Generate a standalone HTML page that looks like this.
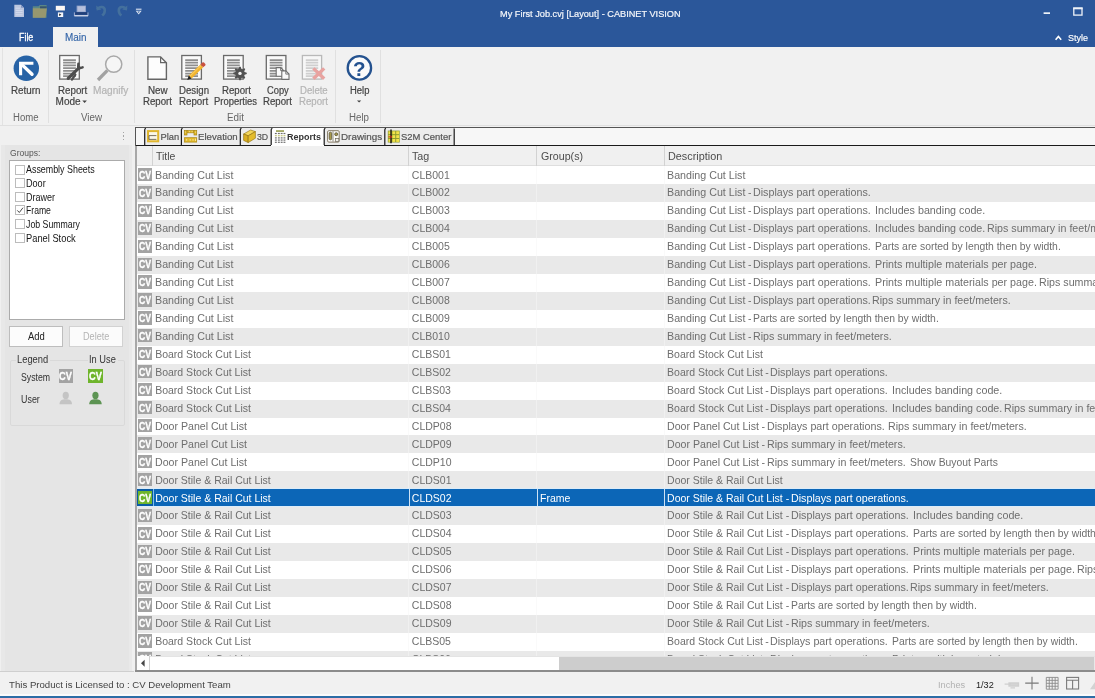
<!DOCTYPE html>
<html lang="en"><head><meta charset="utf-8"><title>My First Job.cvj [Layout] - CABINET VISION</title>
<style>
html,body{margin:0;padding:0;}
body{width:1095px;height:698px;overflow:hidden;position:relative;background:#f1f1f1;font-family:"Liberation Sans",sans-serif;}
#app{position:absolute;left:0;top:0;width:1095px;height:698px;overflow:hidden;will-change:transform;}
#app div{position:absolute;box-sizing:border-box;}
#app .t{white-space:pre;transform-origin:0 50%;}
#app svg{position:absolute;left:0;top:0;}
</style></head><body><div id="app">
<div style="left:0px;top:0px;width:1095px;height:47px;background:#2b579a;"></div>
<div style="left:53px;top:27px;width:45px;height:21px;background:#f1f1f1;"></div>
<div id="t1" class="t" style="left:19.00px;top:30.80px;font:400 10px/13px 'Liberation Sans', sans-serif;color:#ffffff;transform:scaleX(0.8868);-webkit-text-stroke:0.3px #ffffff;">File</div>
<div id="t2" class="t" style="left:65.00px;top:30.80px;font:400 10px/13px 'Liberation Sans', sans-serif;color:#3566a8;transform:scaleX(0.9914);-webkit-text-stroke:0.15px #3566a8;">Main</div>
<div id="t3" class="t" style="left:499.80px;top:7.50px;font:400 9.6px/12px 'Liberation Sans', sans-serif;color:#f4f6fa;transform:scaleX(0.9579);-webkit-text-stroke:0.2px #f4f6fa;">My First Job.cvj [Layout] - CABINET VISION</div>
<div id="t4" class="t" style="left:1067.50px;top:31.50px;font:400 9.6px/12px 'Liberation Sans', sans-serif;color:#ffffff;transform:scaleX(0.9417);-webkit-text-stroke:0.15px #ffffff;">Style</div>
<div style="left:0px;top:47px;width:1095px;height:79px;background:#f1f1f1;"></div>
<div style="left:0px;top:125px;width:1095px;height:1px;background:#e0e0e0;"></div>
<div style="left:48px;top:50px;width:1px;height:73px;background:#e0e0e0;"></div>
<div style="left:134px;top:50px;width:1px;height:73px;background:#e0e0e0;"></div>
<div style="left:335px;top:50px;width:1px;height:73px;background:#e0e0e0;"></div>
<div style="left:380px;top:50px;width:1px;height:73px;background:#e0e0e0;"></div>
<div style="left:1.5px;top:48px;width:1px;height:77px;background:#e2e2e2;"></div>
<div id="t5" class="t" style="left:11.20px;top:84.10px;font:400 10px/13px 'Liberation Sans', sans-serif;color:#444444;transform:scaleX(0.9828);-webkit-text-stroke:0.2px #444444;">Return</div>
<div id="t6" class="t" style="left:57.50px;top:84.10px;font:400 10px/13px 'Liberation Sans', sans-serif;color:#444444;transform:scaleX(0.9762);-webkit-text-stroke:0.2px #444444;">Report</div>
<div id="t7" class="t" style="left:55.60px;top:95.20px;font:400 10px/13px 'Liberation Sans', sans-serif;color:#444444;-webkit-text-stroke:0.2px #444444;">Mode</div>
<div id="t8" class="t" style="left:92.60px;top:84.10px;font:400 10px/13px 'Liberation Sans', sans-serif;color:#b4b4b4;transform:scaleX(1.0110);-webkit-text-stroke:0.2px #b4b4b4;">Magnify</div>
<div id="t9" class="t" style="left:147.80px;top:84.10px;font:400 10px/13px 'Liberation Sans', sans-serif;color:#444444;transform:scaleX(0.9842);-webkit-text-stroke:0.2px #444444;">New</div>
<div id="t10" class="t" style="left:143.00px;top:95.20px;font:400 10px/13px 'Liberation Sans', sans-serif;color:#444444;transform:scaleX(0.9662);-webkit-text-stroke:0.2px #444444;">Report</div>
<div id="t11" class="t" style="left:178.80px;top:84.10px;font:400 10px/13px 'Liberation Sans', sans-serif;color:#444444;transform:scaleX(0.9634);-webkit-text-stroke:0.2px #444444;">Design</div>
<div id="t12" class="t" style="left:178.80px;top:95.20px;font:400 10px/13px 'Liberation Sans', sans-serif;color:#444444;transform:scaleX(0.9728);-webkit-text-stroke:0.2px #444444;">Report</div>
<div id="t13" class="t" style="left:221.60px;top:84.10px;font:400 10px/13px 'Liberation Sans', sans-serif;color:#444444;transform:scaleX(0.9662);-webkit-text-stroke:0.2px #444444;">Report</div>
<div id="t14" class="t" style="left:214.00px;top:95.20px;font:400 10px/13px 'Liberation Sans', sans-serif;color:#444444;transform:scaleX(0.9434);-webkit-text-stroke:0.2px #444444;">Properties</div>
<div id="t15" class="t" style="left:267.40px;top:84.10px;font:400 10px/13px 'Liberation Sans', sans-serif;color:#444444;transform:scaleX(0.9332);-webkit-text-stroke:0.2px #444444;">Copy</div>
<div id="t16" class="t" style="left:263.20px;top:95.20px;font:400 10px/13px 'Liberation Sans', sans-serif;color:#444444;transform:scaleX(0.9628);-webkit-text-stroke:0.2px #444444;">Report</div>
<div id="t17" class="t" style="left:299.80px;top:84.10px;font:400 10px/13px 'Liberation Sans', sans-serif;color:#b4b4b4;transform:scaleX(0.9583);-webkit-text-stroke:0.2px #b4b4b4;">Delete</div>
<div id="t18" class="t" style="left:299.00px;top:95.20px;font:400 10px/13px 'Liberation Sans', sans-serif;color:#b4b4b4;transform:scaleX(0.9662);-webkit-text-stroke:0.2px #b4b4b4;">Report</div>
<div id="t19" class="t" style="left:349.60px;top:84.10px;font:400 10px/13px 'Liberation Sans', sans-serif;color:#444444;transform:scaleX(0.9427);-webkit-text-stroke:0.2px #444444;">Help</div>
<div id="t20" class="t" style="left:12.85px;top:110.50px;font:400 10px/13px 'Liberation Sans', sans-serif;color:#666666;transform:scaleX(0.9555);">Home</div>
<div id="t21" class="t" style="left:81.30px;top:110.50px;font:400 10px/13px 'Liberation Sans', sans-serif;color:#666666;transform:scaleX(0.9767);">View</div>
<div id="t22" class="t" style="left:227.20px;top:110.50px;font:400 10px/13px 'Liberation Sans', sans-serif;color:#666666;transform:scaleX(0.9864);">Edit</div>
<div id="t23" class="t" style="left:349.10px;top:110.50px;font:400 10px/13px 'Liberation Sans', sans-serif;color:#666666;transform:scaleX(0.9719);">Help</div>
<div style="left:0px;top:126.2px;width:134px;height:19px;background:#f0f0f0;"></div>
<div style="left:0px;top:145px;width:134px;height:527px;background:#e5e5e5;"></div>
<div style="left:0px;top:145px;width:1px;height:527px;background:#f0f0f0;"></div>
<div style="left:1px;top:145px;width:4px;height:527px;background:#e8e8e8;"></div>
<div style="left:129px;top:145px;width:3px;height:527px;background:#e9e9e9;"></div>
<div style="left:132px;top:126.2px;width:3px;height:546px;background:#f0f0f0;"></div>
<div style="left:123px;top:132.0px;width:1.3px;height:1.3px;background:#a6a6a6;"></div>
<div style="left:123px;top:135.3px;width:1.3px;height:1.3px;background:#a6a6a6;"></div>
<div style="left:123px;top:138.6px;width:1.3px;height:1.3px;background:#a6a6a6;"></div>
<div id="t24" class="t" style="left:9.80px;top:146.60px;font:400 9px/12px 'Liberation Sans', sans-serif;color:#555;transform:scaleX(0.9495);">Groups:</div>
<div style="left:9px;top:160px;width:116px;height:160px;background:#ffffff;border:1px solid #ababab;"></div>
<div style="left:15px;top:165px;width:10px;height:10px;background:#ffffff;border:1px solid #bcbcbc;"></div>
<div id="t25" class="t" style="left:26.30px;top:162.40px;font:400 10.8px/14px 'Liberation Sans', sans-serif;color:#151515;transform:scaleX(0.8235);">Assembly Sheets</div>
<div style="left:15px;top:178px;width:10px;height:10px;background:#ffffff;border:1px solid #bcbcbc;"></div>
<div id="t26" class="t" style="left:26.30px;top:176.03px;font:400 10.8px/14px 'Liberation Sans', sans-serif;color:#151515;transform:scaleX(0.8417);">Door</div>
<div style="left:15px;top:192px;width:10px;height:10px;background:#ffffff;border:1px solid #bcbcbc;"></div>
<div id="t27" class="t" style="left:26.30px;top:189.66px;font:400 10.8px/14px 'Liberation Sans', sans-serif;color:#151515;transform:scaleX(0.8334);">Drawer</div>
<div style="left:15px;top:205px;width:10px;height:10px;background:#ffffff;border:1px solid #bcbcbc;"></div>
<div id="t28" class="t" style="left:26.30px;top:203.29px;font:400 10.8px/14px 'Liberation Sans', sans-serif;color:#151515;transform:scaleX(0.7980);">Frame</div>
<div style="left:15px;top:219px;width:10px;height:10px;background:#ffffff;border:1px solid #bcbcbc;"></div>
<div id="t29" class="t" style="left:26.30px;top:216.92px;font:400 10.8px/14px 'Liberation Sans', sans-serif;color:#151515;transform:scaleX(0.8107);">Job Summary</div>
<div style="left:15px;top:233px;width:10px;height:10px;background:#ffffff;border:1px solid #bcbcbc;"></div>
<div id="t30" class="t" style="left:26.30px;top:230.55px;font:400 10.8px/14px 'Liberation Sans', sans-serif;color:#151515;transform:scaleX(0.8625);">Panel Stock</div>
<div style="left:9px;top:326px;width:54px;height:21px;background:#fcfcfc;border:1px solid #bdbdbd;"></div>
<div style="left:69px;top:326px;width:54px;height:21px;background:#fbfbfb;border:1px solid #d2d2d2;"></div>
<div id="t31" class="t" style="left:28.00px;top:330.10px;font:400 10px/13px 'Liberation Sans', sans-serif;color:#222;transform:scaleX(0.9440);">Add</div>
<div id="t32" class="t" style="left:82.80px;top:330.10px;font:400 10px/13px 'Liberation Sans', sans-serif;color:#b4b4b4;transform:scaleX(0.9133);">Delete</div>
<div style="left:9.5px;top:359.8px;width:115px;height:66px;background:transparent;border:1px solid #d9d9d9;border-radius:2px;"></div>
<div style="left:15.5px;top:354px;width:34.5px;height:12px;background:#e5e5e5;"></div>
<div style="left:87.5px;top:354px;width:30.5px;height:12px;background:#e5e5e5;"></div>
<div id="t33" class="t" style="left:17.00px;top:353.10px;font:400 10px/13px 'Liberation Sans', sans-serif;color:#333;transform:scaleX(0.9348);">Legend</div>
<div id="t34" class="t" style="left:89.20px;top:353.10px;font:400 10px/13px 'Liberation Sans', sans-serif;color:#333;transform:scaleX(0.9271);">In Use</div>
<div id="t35" class="t" style="left:20.60px;top:370.90px;font:400 10px/13px 'Liberation Sans', sans-serif;color:#333;transform:scaleX(0.8727);">System</div>
<div id="t36" class="t" style="left:20.60px;top:393.30px;font:400 10px/13px 'Liberation Sans', sans-serif;color:#333;transform:scaleX(0.8899);">User</div>
<div style="left:58.6px;top:369.2px;width:14.2px;height:13.8px;background:#a3a3a3;"></div>
<div id="t37" class="t" style="left:59.40px;top:370.30px;font:700 10.8px/12px 'Liberation Sans', sans-serif;color:#ffffff;transform:scaleX(0.8533);-webkit-text-stroke:0.35px #ffffff;">CV</div>
<div style="left:88.4px;top:369.2px;width:14.2px;height:13.8px;background:#6fb52c;"></div>
<div id="t38" class="t" style="left:89.20px;top:370.30px;font:700 10.8px/12px 'Liberation Sans', sans-serif;color:#ffffff;transform:scaleX(0.8533);-webkit-text-stroke:0.35px #ffffff;">CV</div>
<div style="left:135px;top:127px;width:960px;height:545px;background:#ffffff;"></div>
<div style="left:135px;top:146px;width:2px;height:526px;background:#a8a8a8;"></div>
<div style="left:135px;top:127px;width:1px;height:19px;background:#555555;"></div>
<div style="left:135px;top:127px;width:960px;height:1px;background:#555555;"></div>
<div style="left:136px;top:128px;width:959px;height:17px;background:#f7f7f7;"></div>
<div style="left:136.2px;top:144.7px;width:959px;height:1.3px;background:#1a1a1a;"></div>
<div style="left:144.7px;top:128.3px;width:36.70000000000002px;height:16.4px;background:#ececec;"></div>
<div id="t39" class="t" style="left:160.60px;top:131.00px;font:400 9.3px/12px 'Liberation Sans', sans-serif;color:#555555;-webkit-text-stroke:0.2px #555555;">Plan</div>
<div style="left:181.4px;top:128.3px;width:58.900000000000006px;height:16.4px;background:#ececec;"></div>
<div id="t40" class="t" style="left:198.30px;top:131.00px;font:400 9.3px/12px 'Liberation Sans', sans-serif;color:#555555;transform:scaleX(1.0379);-webkit-text-stroke:0.2px #555555;">Elevation</div>
<div style="left:240.3px;top:128.3px;width:30.899999999999977px;height:16.4px;background:#ececec;"></div>
<div id="t41" class="t" style="left:257.00px;top:131.00px;font:400 9.3px/12px 'Liberation Sans', sans-serif;color:#555555;transform:scaleX(0.9419);-webkit-text-stroke:0.2px #555555;">3D</div>
<div style="left:271.2px;top:128.3px;width:53.0px;height:17.8px;background:#ffffff;"></div>
<div id="t42" class="t" style="left:287.40px;top:131.00px;font:700 9.3px/12px 'Liberation Sans', sans-serif;color:#333333;transform:scaleX(0.9675);">Reports</div>
<div style="left:324.2px;top:128.3px;width:60.60000000000002px;height:16.4px;background:#ececec;"></div>
<div id="t43" class="t" style="left:341.00px;top:131.00px;font:400 9.3px/12px 'Liberation Sans', sans-serif;color:#555555;transform:scaleX(1.0606);-webkit-text-stroke:0.2px #555555;">Drawings</div>
<div style="left:384.8px;top:128.3px;width:69.39999999999998px;height:16.4px;background:#ececec;"></div>
<div id="t44" class="t" style="left:401.30px;top:131.00px;font:400 9.3px/12px 'Liberation Sans', sans-serif;color:#555555;transform:scaleX(1.0139);-webkit-text-stroke:0.2px #555555;">S2M Center</div>
<div style="left:137px;top:146px;width:958px;height:20.3px;background:#f0f0f0;"></div>
<div style="left:137px;top:165.4px;width:958px;height:1px;background:#dedede;"></div>
<div style="left:152px;top:146px;width:1px;height:20px;background:#d2d2d2;"></div>
<div style="left:408px;top:146px;width:1px;height:20px;background:#d2d2d2;"></div>
<div style="left:536px;top:146px;width:1px;height:20px;background:#d2d2d2;"></div>
<div style="left:664px;top:146px;width:1px;height:20px;background:#d2d2d2;"></div>
<div id="t45" class="t" style="left:156.00px;top:149.50px;font:400 10px/13px 'Liberation Sans', sans-serif;color:#4c4c4c;transform:scaleX(1.0469);">Title</div>
<div id="t46" class="t" style="left:412.40px;top:149.50px;font:400 10px/13px 'Liberation Sans', sans-serif;color:#4c4c4c;transform:scaleX(1.0729);">Tag</div>
<div id="t47" class="t" style="left:540.80px;top:149.50px;font:400 10px/13px 'Liberation Sans', sans-serif;color:#4c4c4c;transform:scaleX(1.0646);">Group(s)</div>
<div id="t48" class="t" style="left:668.00px;top:149.50px;font:400 10px/13px 'Liberation Sans', sans-serif;color:#4c4c4c;transform:scaleX(1.0833);">Description</div>
<div style="left:137px;top:166.3px;width:958px;height:17.945px;background:#ffffff;"></div>
<div style="left:408px;top:166.3px;width:1px;height:17.945px;background:#fafafa;"></div>
<div style="left:536px;top:166.3px;width:1px;height:17.945px;background:#fafafa;"></div>
<div style="left:664px;top:166.3px;width:1px;height:17.945px;background:#fafafa;"></div>
<div style="left:138.2px;top:167.8px;width:13.5px;height:13.2px;background:#a3a3a3;"></div>
<div id="t49" class="t" style="left:139.00px;top:168.60px;font:700 10.8px/12px 'Liberation Sans', sans-serif;color:#ffffff;transform:scaleX(0.8067);-webkit-text-stroke:0.35px #ffffff;">CV</div>
<div id="t50" class="t" style="left:155.20px;top:168.00px;font:400 10.5px/14px 'Liberation Sans', sans-serif;color:#6e6e6e;transform:scaleX(1.0174);">Banding Cut List</div>
<div id="t51" class="t" style="left:411.80px;top:168.00px;font:400 10.5px/14px 'Liberation Sans', sans-serif;color:#6e6e6e;">CLB001</div>
<div id="t52" class="t" style="left:667.10px;top:168.00px;font:400 10.5px/14px 'Liberation Sans', sans-serif;color:#6e6e6e;transform:scaleX(1.0174);">Banding Cut List</div>
<div style="left:137px;top:184.245px;width:958px;height:17.945px;background:#e9e9e9;"></div>
<div style="left:408px;top:184.245px;width:1px;height:17.945px;background:#f0f0f0;"></div>
<div style="left:536px;top:184.245px;width:1px;height:17.945px;background:#f0f0f0;"></div>
<div style="left:664px;top:184.245px;width:1px;height:17.945px;background:#f0f0f0;"></div>
<div style="left:138.2px;top:185.745px;width:13.5px;height:13.2px;background:#a3a3a3;"></div>
<div id="t53" class="t" style="left:139.00px;top:186.54px;font:700 10.8px/12px 'Liberation Sans', sans-serif;color:#ffffff;transform:scaleX(0.8067);-webkit-text-stroke:0.35px #ffffff;">CV</div>
<div id="t54" class="t" style="left:155.20px;top:185.00px;font:400 10.5px/14px 'Liberation Sans', sans-serif;color:#6e6e6e;transform:scaleX(1.0174);">Banding Cut List</div>
<div id="t55" class="t" style="left:411.80px;top:185.00px;font:400 10.5px/14px 'Liberation Sans', sans-serif;color:#6e6e6e;">CLB002</div>
<div id="t56" class="t" style="left:667.10px;top:185.00px;font:400 10.5px/14px 'Liberation Sans', sans-serif;color:#6e6e6e;transform:scaleX(1.0174);">Banding Cut List</div>
<div id="t57" class="t" style="left:748.10px;top:185.00px;font:400 10.5px/14px 'Liberation Sans', sans-serif;color:#6e6e6e;">-</div>
<div id="t58" class="t" style="left:753.25px;top:185.00px;font:400 10.5px/14px 'Liberation Sans', sans-serif;color:#6e6e6e;transform:scaleX(1.0185);">Displays part operations.</div>
<div style="left:137px;top:202.19px;width:958px;height:17.945px;background:#ffffff;"></div>
<div style="left:408px;top:202.19px;width:1px;height:17.945px;background:#fafafa;"></div>
<div style="left:536px;top:202.19px;width:1px;height:17.945px;background:#fafafa;"></div>
<div style="left:664px;top:202.19px;width:1px;height:17.945px;background:#fafafa;"></div>
<div style="left:138.2px;top:203.69px;width:13.5px;height:13.2px;background:#a3a3a3;"></div>
<div id="t59" class="t" style="left:139.00px;top:204.49px;font:700 10.8px/12px 'Liberation Sans', sans-serif;color:#ffffff;transform:scaleX(0.8067);-webkit-text-stroke:0.35px #ffffff;">CV</div>
<div id="t60" class="t" style="left:155.20px;top:203.00px;font:400 10.5px/14px 'Liberation Sans', sans-serif;color:#6e6e6e;transform:scaleX(1.0174);">Banding Cut List</div>
<div id="t61" class="t" style="left:411.80px;top:203.00px;font:400 10.5px/14px 'Liberation Sans', sans-serif;color:#6e6e6e;">CLB003</div>
<div id="t62" class="t" style="left:667.10px;top:203.00px;font:400 10.5px/14px 'Liberation Sans', sans-serif;color:#6e6e6e;transform:scaleX(1.0174);">Banding Cut List</div>
<div id="t63" class="t" style="left:748.10px;top:203.00px;font:400 10.5px/14px 'Liberation Sans', sans-serif;color:#6e6e6e;">-</div>
<div id="t64" class="t" style="left:753.25px;top:203.00px;font:400 10.5px/14px 'Liberation Sans', sans-serif;color:#6e6e6e;transform:scaleX(1.0185);">Displays part operations.</div>
<div id="t65" class="t" style="left:874.95px;top:203.00px;font:400 10.5px/14px 'Liberation Sans', sans-serif;color:#6e6e6e;transform:scaleX(1.0213);">Includes banding code.</div>
<div style="left:137px;top:220.13500000000002px;width:958px;height:17.945px;background:#e9e9e9;"></div>
<div style="left:408px;top:220.13500000000002px;width:1px;height:17.945px;background:#f0f0f0;"></div>
<div style="left:536px;top:220.13500000000002px;width:1px;height:17.945px;background:#f0f0f0;"></div>
<div style="left:664px;top:220.13500000000002px;width:1px;height:17.945px;background:#f0f0f0;"></div>
<div style="left:138.2px;top:221.63500000000002px;width:13.5px;height:13.2px;background:#a3a3a3;"></div>
<div id="t66" class="t" style="left:139.00px;top:222.44px;font:700 10.8px/12px 'Liberation Sans', sans-serif;color:#ffffff;transform:scaleX(0.8067);-webkit-text-stroke:0.35px #ffffff;">CV</div>
<div id="t67" class="t" style="left:155.20px;top:221.00px;font:400 10.5px/14px 'Liberation Sans', sans-serif;color:#6e6e6e;transform:scaleX(1.0174);">Banding Cut List</div>
<div id="t68" class="t" style="left:411.80px;top:221.00px;font:400 10.5px/14px 'Liberation Sans', sans-serif;color:#6e6e6e;">CLB004</div>
<div id="t69" class="t" style="left:667.10px;top:221.00px;font:400 10.5px/14px 'Liberation Sans', sans-serif;color:#6e6e6e;transform:scaleX(1.0174);">Banding Cut List</div>
<div id="t70" class="t" style="left:748.10px;top:221.00px;font:400 10.5px/14px 'Liberation Sans', sans-serif;color:#6e6e6e;">-</div>
<div id="t71" class="t" style="left:753.25px;top:221.00px;font:400 10.5px/14px 'Liberation Sans', sans-serif;color:#6e6e6e;transform:scaleX(1.0185);">Displays part operations.</div>
<div id="t72" class="t" style="left:874.95px;top:221.00px;font:400 10.5px/14px 'Liberation Sans', sans-serif;color:#6e6e6e;transform:scaleX(1.0213);">Includes banding code.</div>
<div id="t73" class="t" style="left:986.65px;top:221.00px;font:400 10.5px/14px 'Liberation Sans', sans-serif;color:#6e6e6e;transform:scaleX(1.0158);">Rips summary in feet/meters.</div>
<div style="left:137px;top:238.08px;width:958px;height:17.945px;background:#ffffff;"></div>
<div style="left:408px;top:238.08px;width:1px;height:17.945px;background:#fafafa;"></div>
<div style="left:536px;top:238.08px;width:1px;height:17.945px;background:#fafafa;"></div>
<div style="left:664px;top:238.08px;width:1px;height:17.945px;background:#fafafa;"></div>
<div style="left:138.2px;top:239.58px;width:13.5px;height:13.2px;background:#a3a3a3;"></div>
<div id="t74" class="t" style="left:139.00px;top:240.38px;font:700 10.8px/12px 'Liberation Sans', sans-serif;color:#ffffff;transform:scaleX(0.8067);-webkit-text-stroke:0.35px #ffffff;">CV</div>
<div id="t75" class="t" style="left:155.20px;top:239.00px;font:400 10.5px/14px 'Liberation Sans', sans-serif;color:#6e6e6e;transform:scaleX(1.0174);">Banding Cut List</div>
<div id="t76" class="t" style="left:411.80px;top:239.00px;font:400 10.5px/14px 'Liberation Sans', sans-serif;color:#6e6e6e;">CLB005</div>
<div id="t77" class="t" style="left:667.10px;top:239.00px;font:400 10.5px/14px 'Liberation Sans', sans-serif;color:#6e6e6e;transform:scaleX(1.0174);">Banding Cut List</div>
<div id="t78" class="t" style="left:748.10px;top:239.00px;font:400 10.5px/14px 'Liberation Sans', sans-serif;color:#6e6e6e;">-</div>
<div id="t79" class="t" style="left:753.25px;top:239.00px;font:400 10.5px/14px 'Liberation Sans', sans-serif;color:#6e6e6e;transform:scaleX(1.0185);">Displays part operations.</div>
<div id="t80" class="t" style="left:874.95px;top:239.00px;font:400 10.5px/14px 'Liberation Sans', sans-serif;color:#6e6e6e;transform:scaleX(0.9885);">Parts are sorted by length then by width.</div>
<div style="left:137px;top:256.025px;width:958px;height:17.945px;background:#e9e9e9;"></div>
<div style="left:408px;top:256.025px;width:1px;height:17.945px;background:#f0f0f0;"></div>
<div style="left:536px;top:256.025px;width:1px;height:17.945px;background:#f0f0f0;"></div>
<div style="left:664px;top:256.025px;width:1px;height:17.945px;background:#f0f0f0;"></div>
<div style="left:138.2px;top:257.525px;width:13.5px;height:13.2px;background:#a3a3a3;"></div>
<div id="t81" class="t" style="left:139.00px;top:258.32px;font:700 10.8px/12px 'Liberation Sans', sans-serif;color:#ffffff;transform:scaleX(0.8067);-webkit-text-stroke:0.35px #ffffff;">CV</div>
<div id="t82" class="t" style="left:155.20px;top:257.00px;font:400 10.5px/14px 'Liberation Sans', sans-serif;color:#6e6e6e;transform:scaleX(1.0174);">Banding Cut List</div>
<div id="t83" class="t" style="left:411.80px;top:257.00px;font:400 10.5px/14px 'Liberation Sans', sans-serif;color:#6e6e6e;">CLB006</div>
<div id="t84" class="t" style="left:667.10px;top:257.00px;font:400 10.5px/14px 'Liberation Sans', sans-serif;color:#6e6e6e;transform:scaleX(1.0174);">Banding Cut List</div>
<div id="t85" class="t" style="left:748.10px;top:257.00px;font:400 10.5px/14px 'Liberation Sans', sans-serif;color:#6e6e6e;">-</div>
<div id="t86" class="t" style="left:753.25px;top:257.00px;font:400 10.5px/14px 'Liberation Sans', sans-serif;color:#6e6e6e;transform:scaleX(1.0185);">Displays part operations.</div>
<div id="t87" class="t" style="left:874.95px;top:257.00px;font:400 10.5px/14px 'Liberation Sans', sans-serif;color:#6e6e6e;transform:scaleX(1.0198);">Prints multiple materials per page.</div>
<div style="left:137px;top:273.97px;width:958px;height:17.945px;background:#ffffff;"></div>
<div style="left:408px;top:273.97px;width:1px;height:17.945px;background:#fafafa;"></div>
<div style="left:536px;top:273.97px;width:1px;height:17.945px;background:#fafafa;"></div>
<div style="left:664px;top:273.97px;width:1px;height:17.945px;background:#fafafa;"></div>
<div style="left:138.2px;top:275.47px;width:13.5px;height:13.2px;background:#a3a3a3;"></div>
<div id="t88" class="t" style="left:139.00px;top:276.27px;font:700 10.8px/12px 'Liberation Sans', sans-serif;color:#ffffff;transform:scaleX(0.8067);-webkit-text-stroke:0.35px #ffffff;">CV</div>
<div id="t89" class="t" style="left:155.20px;top:275.00px;font:400 10.5px/14px 'Liberation Sans', sans-serif;color:#6e6e6e;transform:scaleX(1.0174);">Banding Cut List</div>
<div id="t90" class="t" style="left:411.80px;top:275.00px;font:400 10.5px/14px 'Liberation Sans', sans-serif;color:#6e6e6e;">CLB007</div>
<div id="t91" class="t" style="left:667.10px;top:275.00px;font:400 10.5px/14px 'Liberation Sans', sans-serif;color:#6e6e6e;transform:scaleX(1.0174);">Banding Cut List</div>
<div id="t92" class="t" style="left:748.10px;top:275.00px;font:400 10.5px/14px 'Liberation Sans', sans-serif;color:#6e6e6e;">-</div>
<div id="t93" class="t" style="left:753.25px;top:275.00px;font:400 10.5px/14px 'Liberation Sans', sans-serif;color:#6e6e6e;transform:scaleX(1.0185);">Displays part operations.</div>
<div id="t94" class="t" style="left:874.95px;top:275.00px;font:400 10.5px/14px 'Liberation Sans', sans-serif;color:#6e6e6e;transform:scaleX(1.0198);">Prints multiple materials per page.</div>
<div id="t95" class="t" style="left:1039.05px;top:275.00px;font:400 10.5px/14px 'Liberation Sans', sans-serif;color:#6e6e6e;transform:scaleX(1.0158);">Rips summary in feet/meters.</div>
<div style="left:137px;top:291.915px;width:958px;height:17.945px;background:#e9e9e9;"></div>
<div style="left:408px;top:291.915px;width:1px;height:17.945px;background:#f0f0f0;"></div>
<div style="left:536px;top:291.915px;width:1px;height:17.945px;background:#f0f0f0;"></div>
<div style="left:664px;top:291.915px;width:1px;height:17.945px;background:#f0f0f0;"></div>
<div style="left:138.2px;top:293.415px;width:13.5px;height:13.2px;background:#a3a3a3;"></div>
<div id="t96" class="t" style="left:139.00px;top:294.22px;font:700 10.8px/12px 'Liberation Sans', sans-serif;color:#ffffff;transform:scaleX(0.8067);-webkit-text-stroke:0.35px #ffffff;">CV</div>
<div id="t97" class="t" style="left:155.20px;top:293.00px;font:400 10.5px/14px 'Liberation Sans', sans-serif;color:#6e6e6e;transform:scaleX(1.0174);">Banding Cut List</div>
<div id="t98" class="t" style="left:411.80px;top:293.00px;font:400 10.5px/14px 'Liberation Sans', sans-serif;color:#6e6e6e;">CLB008</div>
<div id="t99" class="t" style="left:667.10px;top:293.00px;font:400 10.5px/14px 'Liberation Sans', sans-serif;color:#6e6e6e;transform:scaleX(1.0174);">Banding Cut List</div>
<div id="t100" class="t" style="left:748.10px;top:293.00px;font:400 10.5px/14px 'Liberation Sans', sans-serif;color:#6e6e6e;">-</div>
<div id="t101" class="t" style="left:753.25px;top:293.00px;font:400 10.5px/14px 'Liberation Sans', sans-serif;color:#6e6e6e;transform:scaleX(1.0185);">Displays part operations.</div>
<div id="t102" class="t" style="left:872.35px;top:293.00px;font:400 10.5px/14px 'Liberation Sans', sans-serif;color:#6e6e6e;transform:scaleX(1.0158);">Rips summary in feet/meters.</div>
<div style="left:137px;top:309.86px;width:958px;height:17.945px;background:#ffffff;"></div>
<div style="left:408px;top:309.86px;width:1px;height:17.945px;background:#fafafa;"></div>
<div style="left:536px;top:309.86px;width:1px;height:17.945px;background:#fafafa;"></div>
<div style="left:664px;top:309.86px;width:1px;height:17.945px;background:#fafafa;"></div>
<div style="left:138.2px;top:311.36px;width:13.5px;height:13.2px;background:#a3a3a3;"></div>
<div id="t103" class="t" style="left:139.00px;top:312.16px;font:700 10.8px/12px 'Liberation Sans', sans-serif;color:#ffffff;transform:scaleX(0.8067);-webkit-text-stroke:0.35px #ffffff;">CV</div>
<div id="t104" class="t" style="left:155.20px;top:311.00px;font:400 10.5px/14px 'Liberation Sans', sans-serif;color:#6e6e6e;transform:scaleX(1.0174);">Banding Cut List</div>
<div id="t105" class="t" style="left:411.80px;top:311.00px;font:400 10.5px/14px 'Liberation Sans', sans-serif;color:#6e6e6e;">CLB009</div>
<div id="t106" class="t" style="left:667.10px;top:311.00px;font:400 10.5px/14px 'Liberation Sans', sans-serif;color:#6e6e6e;transform:scaleX(1.0174);">Banding Cut List</div>
<div id="t107" class="t" style="left:748.10px;top:311.00px;font:400 10.5px/14px 'Liberation Sans', sans-serif;color:#6e6e6e;">-</div>
<div id="t108" class="t" style="left:753.25px;top:311.00px;font:400 10.5px/14px 'Liberation Sans', sans-serif;color:#6e6e6e;transform:scaleX(0.9885);">Parts are sorted by length then by width.</div>
<div style="left:137px;top:327.805px;width:958px;height:17.945px;background:#e9e9e9;"></div>
<div style="left:408px;top:327.805px;width:1px;height:17.945px;background:#f0f0f0;"></div>
<div style="left:536px;top:327.805px;width:1px;height:17.945px;background:#f0f0f0;"></div>
<div style="left:664px;top:327.805px;width:1px;height:17.945px;background:#f0f0f0;"></div>
<div style="left:138.2px;top:329.305px;width:13.5px;height:13.2px;background:#a3a3a3;"></div>
<div id="t109" class="t" style="left:139.00px;top:330.11px;font:700 10.8px/12px 'Liberation Sans', sans-serif;color:#ffffff;transform:scaleX(0.8067);-webkit-text-stroke:0.35px #ffffff;">CV</div>
<div id="t110" class="t" style="left:155.20px;top:329.00px;font:400 10.5px/14px 'Liberation Sans', sans-serif;color:#6e6e6e;transform:scaleX(1.0174);">Banding Cut List</div>
<div id="t111" class="t" style="left:411.80px;top:329.00px;font:400 10.5px/14px 'Liberation Sans', sans-serif;color:#6e6e6e;">CLB010</div>
<div id="t112" class="t" style="left:667.10px;top:329.00px;font:400 10.5px/14px 'Liberation Sans', sans-serif;color:#6e6e6e;transform:scaleX(1.0174);">Banding Cut List</div>
<div id="t113" class="t" style="left:748.10px;top:329.00px;font:400 10.5px/14px 'Liberation Sans', sans-serif;color:#6e6e6e;">-</div>
<div id="t114" class="t" style="left:753.25px;top:329.00px;font:400 10.5px/14px 'Liberation Sans', sans-serif;color:#6e6e6e;transform:scaleX(1.0158);">Rips summary in feet/meters.</div>
<div style="left:137px;top:345.75px;width:958px;height:17.945px;background:#ffffff;"></div>
<div style="left:408px;top:345.75px;width:1px;height:17.945px;background:#fafafa;"></div>
<div style="left:536px;top:345.75px;width:1px;height:17.945px;background:#fafafa;"></div>
<div style="left:664px;top:345.75px;width:1px;height:17.945px;background:#fafafa;"></div>
<div style="left:138.2px;top:347.25px;width:13.5px;height:13.2px;background:#a3a3a3;"></div>
<div id="t115" class="t" style="left:139.00px;top:348.05px;font:700 10.8px/12px 'Liberation Sans', sans-serif;color:#ffffff;transform:scaleX(0.8067);-webkit-text-stroke:0.35px #ffffff;">CV</div>
<div id="t116" class="t" style="left:155.20px;top:347.00px;font:400 10.5px/14px 'Liberation Sans', sans-serif;color:#6e6e6e;">Board Stock Cut List</div>
<div id="t117" class="t" style="left:411.80px;top:347.00px;font:400 10.5px/14px 'Liberation Sans', sans-serif;color:#6e6e6e;">CLBS01</div>
<div id="t118" class="t" style="left:667.10px;top:347.00px;font:400 10.5px/14px 'Liberation Sans', sans-serif;color:#6e6e6e;">Board Stock Cut List</div>
<div style="left:137px;top:363.69500000000005px;width:958px;height:17.945px;background:#e9e9e9;"></div>
<div style="left:408px;top:363.69500000000005px;width:1px;height:17.945px;background:#f0f0f0;"></div>
<div style="left:536px;top:363.69500000000005px;width:1px;height:17.945px;background:#f0f0f0;"></div>
<div style="left:664px;top:363.69500000000005px;width:1px;height:17.945px;background:#f0f0f0;"></div>
<div style="left:138.2px;top:365.19500000000005px;width:13.5px;height:13.2px;background:#a3a3a3;"></div>
<div id="t119" class="t" style="left:139.00px;top:366.00px;font:700 10.8px/12px 'Liberation Sans', sans-serif;color:#ffffff;transform:scaleX(0.8067);-webkit-text-stroke:0.35px #ffffff;">CV</div>
<div id="t120" class="t" style="left:155.20px;top:365.00px;font:400 10.5px/14px 'Liberation Sans', sans-serif;color:#6e6e6e;">Board Stock Cut List</div>
<div id="t121" class="t" style="left:411.80px;top:365.00px;font:400 10.5px/14px 'Liberation Sans', sans-serif;color:#6e6e6e;">CLBS02</div>
<div id="t122" class="t" style="left:667.10px;top:365.00px;font:400 10.5px/14px 'Liberation Sans', sans-serif;color:#6e6e6e;">Board Stock Cut List</div>
<div id="t123" class="t" style="left:765.20px;top:365.00px;font:400 10.5px/14px 'Liberation Sans', sans-serif;color:#6e6e6e;">-</div>
<div id="t124" class="t" style="left:770.35px;top:365.00px;font:400 10.5px/14px 'Liberation Sans', sans-serif;color:#6e6e6e;transform:scaleX(1.0185);">Displays part operations.</div>
<div style="left:137px;top:381.64px;width:958px;height:17.945px;background:#ffffff;"></div>
<div style="left:408px;top:381.64px;width:1px;height:17.945px;background:#fafafa;"></div>
<div style="left:536px;top:381.64px;width:1px;height:17.945px;background:#fafafa;"></div>
<div style="left:664px;top:381.64px;width:1px;height:17.945px;background:#fafafa;"></div>
<div style="left:138.2px;top:383.14px;width:13.5px;height:13.2px;background:#a3a3a3;"></div>
<div id="t125" class="t" style="left:139.00px;top:383.94px;font:700 10.8px/12px 'Liberation Sans', sans-serif;color:#ffffff;transform:scaleX(0.8067);-webkit-text-stroke:0.35px #ffffff;">CV</div>
<div id="t126" class="t" style="left:155.20px;top:383.00px;font:400 10.5px/14px 'Liberation Sans', sans-serif;color:#6e6e6e;">Board Stock Cut List</div>
<div id="t127" class="t" style="left:411.80px;top:383.00px;font:400 10.5px/14px 'Liberation Sans', sans-serif;color:#6e6e6e;">CLBS03</div>
<div id="t128" class="t" style="left:667.10px;top:383.00px;font:400 10.5px/14px 'Liberation Sans', sans-serif;color:#6e6e6e;">Board Stock Cut List</div>
<div id="t129" class="t" style="left:765.20px;top:383.00px;font:400 10.5px/14px 'Liberation Sans', sans-serif;color:#6e6e6e;">-</div>
<div id="t130" class="t" style="left:770.35px;top:383.00px;font:400 10.5px/14px 'Liberation Sans', sans-serif;color:#6e6e6e;transform:scaleX(1.0185);">Displays part operations.</div>
<div id="t131" class="t" style="left:892.05px;top:383.00px;font:400 10.5px/14px 'Liberation Sans', sans-serif;color:#6e6e6e;transform:scaleX(1.0213);">Includes banding code.</div>
<div style="left:137px;top:399.58500000000004px;width:958px;height:17.945px;background:#e9e9e9;"></div>
<div style="left:408px;top:399.58500000000004px;width:1px;height:17.945px;background:#f0f0f0;"></div>
<div style="left:536px;top:399.58500000000004px;width:1px;height:17.945px;background:#f0f0f0;"></div>
<div style="left:664px;top:399.58500000000004px;width:1px;height:17.945px;background:#f0f0f0;"></div>
<div style="left:138.2px;top:401.08500000000004px;width:13.5px;height:13.2px;background:#a3a3a3;"></div>
<div id="t132" class="t" style="left:139.00px;top:401.89px;font:700 10.8px/12px 'Liberation Sans', sans-serif;color:#ffffff;transform:scaleX(0.8067);-webkit-text-stroke:0.35px #ffffff;">CV</div>
<div id="t133" class="t" style="left:155.20px;top:401.00px;font:400 10.5px/14px 'Liberation Sans', sans-serif;color:#6e6e6e;">Board Stock Cut List</div>
<div id="t134" class="t" style="left:411.80px;top:401.00px;font:400 10.5px/14px 'Liberation Sans', sans-serif;color:#6e6e6e;">CLBS04</div>
<div id="t135" class="t" style="left:667.10px;top:401.00px;font:400 10.5px/14px 'Liberation Sans', sans-serif;color:#6e6e6e;">Board Stock Cut List</div>
<div id="t136" class="t" style="left:765.20px;top:401.00px;font:400 10.5px/14px 'Liberation Sans', sans-serif;color:#6e6e6e;">-</div>
<div id="t137" class="t" style="left:770.35px;top:401.00px;font:400 10.5px/14px 'Liberation Sans', sans-serif;color:#6e6e6e;transform:scaleX(1.0185);">Displays part operations.</div>
<div id="t138" class="t" style="left:892.05px;top:401.00px;font:400 10.5px/14px 'Liberation Sans', sans-serif;color:#6e6e6e;transform:scaleX(1.0213);">Includes banding code.</div>
<div id="t139" class="t" style="left:1003.75px;top:401.00px;font:400 10.5px/14px 'Liberation Sans', sans-serif;color:#6e6e6e;transform:scaleX(1.0158);">Rips summary in feet/meters.</div>
<div style="left:137px;top:417.53000000000003px;width:958px;height:17.945px;background:#ffffff;"></div>
<div style="left:408px;top:417.53000000000003px;width:1px;height:17.945px;background:#fafafa;"></div>
<div style="left:536px;top:417.53000000000003px;width:1px;height:17.945px;background:#fafafa;"></div>
<div style="left:664px;top:417.53000000000003px;width:1px;height:17.945px;background:#fafafa;"></div>
<div style="left:138.2px;top:419.03000000000003px;width:13.5px;height:13.2px;background:#a3a3a3;"></div>
<div id="t140" class="t" style="left:139.00px;top:419.83px;font:700 10.8px/12px 'Liberation Sans', sans-serif;color:#ffffff;transform:scaleX(0.8067);-webkit-text-stroke:0.35px #ffffff;">CV</div>
<div id="t141" class="t" style="left:155.20px;top:419.00px;font:400 10.5px/14px 'Liberation Sans', sans-serif;color:#6e6e6e;transform:scaleX(1.0094);">Door Panel Cut List</div>
<div id="t142" class="t" style="left:411.80px;top:419.00px;font:400 10.5px/14px 'Liberation Sans', sans-serif;color:#6e6e6e;">CLDP08</div>
<div id="t143" class="t" style="left:667.10px;top:419.00px;font:400 10.5px/14px 'Liberation Sans', sans-serif;color:#6e6e6e;transform:scaleX(1.0094);">Door Panel Cut List</div>
<div id="t144" class="t" style="left:761.60px;top:419.00px;font:400 10.5px/14px 'Liberation Sans', sans-serif;color:#6e6e6e;">-</div>
<div id="t145" class="t" style="left:766.75px;top:419.00px;font:400 10.5px/14px 'Liberation Sans', sans-serif;color:#6e6e6e;transform:scaleX(1.0185);">Displays part operations.</div>
<div id="t146" class="t" style="left:888.45px;top:419.00px;font:400 10.5px/14px 'Liberation Sans', sans-serif;color:#6e6e6e;transform:scaleX(1.0158);">Rips summary in feet/meters.</div>
<div style="left:137px;top:435.475px;width:958px;height:17.945px;background:#e9e9e9;"></div>
<div style="left:408px;top:435.475px;width:1px;height:17.945px;background:#f0f0f0;"></div>
<div style="left:536px;top:435.475px;width:1px;height:17.945px;background:#f0f0f0;"></div>
<div style="left:664px;top:435.475px;width:1px;height:17.945px;background:#f0f0f0;"></div>
<div style="left:138.2px;top:436.975px;width:13.5px;height:13.2px;background:#a3a3a3;"></div>
<div id="t147" class="t" style="left:139.00px;top:437.78px;font:700 10.8px/12px 'Liberation Sans', sans-serif;color:#ffffff;transform:scaleX(0.8067);-webkit-text-stroke:0.35px #ffffff;">CV</div>
<div id="t148" class="t" style="left:155.20px;top:437.00px;font:400 10.5px/14px 'Liberation Sans', sans-serif;color:#6e6e6e;transform:scaleX(1.0094);">Door Panel Cut List</div>
<div id="t149" class="t" style="left:411.80px;top:437.00px;font:400 10.5px/14px 'Liberation Sans', sans-serif;color:#6e6e6e;">CLDP09</div>
<div id="t150" class="t" style="left:667.10px;top:437.00px;font:400 10.5px/14px 'Liberation Sans', sans-serif;color:#6e6e6e;transform:scaleX(1.0094);">Door Panel Cut List</div>
<div id="t151" class="t" style="left:761.60px;top:437.00px;font:400 10.5px/14px 'Liberation Sans', sans-serif;color:#6e6e6e;">-</div>
<div id="t152" class="t" style="left:766.75px;top:437.00px;font:400 10.5px/14px 'Liberation Sans', sans-serif;color:#6e6e6e;transform:scaleX(1.0158);">Rips summary in feet/meters.</div>
<div style="left:137px;top:453.42px;width:958px;height:17.945px;background:#ffffff;"></div>
<div style="left:408px;top:453.42px;width:1px;height:17.945px;background:#fafafa;"></div>
<div style="left:536px;top:453.42px;width:1px;height:17.945px;background:#fafafa;"></div>
<div style="left:664px;top:453.42px;width:1px;height:17.945px;background:#fafafa;"></div>
<div style="left:138.2px;top:454.92px;width:13.5px;height:13.2px;background:#a3a3a3;"></div>
<div id="t153" class="t" style="left:139.00px;top:455.72px;font:700 10.8px/12px 'Liberation Sans', sans-serif;color:#ffffff;transform:scaleX(0.8067);-webkit-text-stroke:0.35px #ffffff;">CV</div>
<div id="t154" class="t" style="left:155.20px;top:455.00px;font:400 10.5px/14px 'Liberation Sans', sans-serif;color:#6e6e6e;transform:scaleX(1.0094);">Door Panel Cut List</div>
<div id="t155" class="t" style="left:411.80px;top:455.00px;font:400 10.5px/14px 'Liberation Sans', sans-serif;color:#6e6e6e;">CLDP10</div>
<div id="t156" class="t" style="left:667.10px;top:455.00px;font:400 10.5px/14px 'Liberation Sans', sans-serif;color:#6e6e6e;transform:scaleX(1.0094);">Door Panel Cut List</div>
<div id="t157" class="t" style="left:761.60px;top:455.00px;font:400 10.5px/14px 'Liberation Sans', sans-serif;color:#6e6e6e;">-</div>
<div id="t158" class="t" style="left:766.75px;top:455.00px;font:400 10.5px/14px 'Liberation Sans', sans-serif;color:#6e6e6e;transform:scaleX(1.0158);">Rips summary in feet/meters.</div>
<div id="t159" class="t" style="left:910.45px;top:455.00px;font:400 10.5px/14px 'Liberation Sans', sans-serif;color:#6e6e6e;transform:scaleX(0.9832);">Show Buyout Parts</div>
<div style="left:137px;top:471.365px;width:958px;height:17.945px;background:#e9e9e9;"></div>
<div style="left:408px;top:471.365px;width:1px;height:17.945px;background:#f0f0f0;"></div>
<div style="left:536px;top:471.365px;width:1px;height:17.945px;background:#f0f0f0;"></div>
<div style="left:664px;top:471.365px;width:1px;height:17.945px;background:#f0f0f0;"></div>
<div style="left:138.2px;top:472.865px;width:13.5px;height:13.2px;background:#a3a3a3;"></div>
<div id="t160" class="t" style="left:139.00px;top:473.67px;font:700 10.8px/12px 'Liberation Sans', sans-serif;color:#ffffff;transform:scaleX(0.8067);-webkit-text-stroke:0.35px #ffffff;">CV</div>
<div id="t161" class="t" style="left:155.20px;top:473.00px;font:400 10.5px/14px 'Liberation Sans', sans-serif;color:#6e6e6e;">Door Stile &amp; Rail Cut List</div>
<div id="t162" class="t" style="left:411.80px;top:473.00px;font:400 10.5px/14px 'Liberation Sans', sans-serif;color:#6e6e6e;">CLDS01</div>
<div id="t163" class="t" style="left:667.10px;top:473.00px;font:400 10.5px/14px 'Liberation Sans', sans-serif;color:#6e6e6e;">Door Stile &amp; Rail Cut List</div>
<div style="left:137px;top:488.4px;width:958px;height:19px;background:#dcecf9;"></div>
<div style="left:137px;top:489.3px;width:958px;height:17.1px;background:#0c66b7;"></div>
<div style="left:137px;top:489.3px;width:15.5px;height:17.1px;background:#0a5ba4;"></div>
<div style="left:152.5px;top:489.3px;width:1.5px;height:17.1px;background:#7fbdec;"></div>
<div style="left:408.5px;top:489.3px;width:1px;height:17.1px;background:#cfe3f5;"></div>
<div style="left:536.5px;top:489.3px;width:1px;height:17.1px;background:#cfe3f5;"></div>
<div style="left:664.3px;top:489.3px;width:1px;height:17.1px;background:#cfe3f5;"></div>
<div style="left:138.2px;top:490.81px;width:13.5px;height:13.2px;background:#6fb52c;"></div>
<div id="t164" class="t" style="left:139.00px;top:491.61px;font:700 10.8px/12px 'Liberation Sans', sans-serif;color:#ffffff;transform:scaleX(0.8067);-webkit-text-stroke:0.35px #ffffff;">CV</div>
<div id="t165" class="t" style="left:155.20px;top:491.00px;font:400 10.5px/14px 'Liberation Sans', sans-serif;color:#ffffff;">Door Stile &amp; Rail Cut List</div>
<div id="t166" class="t" style="left:411.80px;top:491.00px;font:400 10.5px/14px 'Liberation Sans', sans-serif;color:#ffffff;">CLDS02</div>
<div id="t167" class="t" style="left:540.00px;top:491.00px;font:400 10.5px/14px 'Liberation Sans', sans-serif;color:#ffffff;">Frame</div>
<div id="t168" class="t" style="left:667.10px;top:491.00px;font:400 10.5px/14px 'Liberation Sans', sans-serif;color:#ffffff;">Door Stile &amp; Rail Cut List</div>
<div id="t169" class="t" style="left:785.70px;top:491.00px;font:400 10.5px/14px 'Liberation Sans', sans-serif;color:#ffffff;">-</div>
<div id="t170" class="t" style="left:790.85px;top:491.00px;font:400 10.5px/14px 'Liberation Sans', sans-serif;color:#ffffff;transform:scaleX(1.0185);">Displays part operations.</div>
<div style="left:137px;top:507.255px;width:958px;height:17.945px;background:#e9e9e9;"></div>
<div style="left:408px;top:507.255px;width:1px;height:17.945px;background:#f0f0f0;"></div>
<div style="left:536px;top:507.255px;width:1px;height:17.945px;background:#f0f0f0;"></div>
<div style="left:664px;top:507.255px;width:1px;height:17.945px;background:#f0f0f0;"></div>
<div style="left:138.2px;top:508.755px;width:13.5px;height:13.2px;background:#a3a3a3;"></div>
<div id="t171" class="t" style="left:139.00px;top:509.56px;font:700 10.8px/12px 'Liberation Sans', sans-serif;color:#ffffff;transform:scaleX(0.8067);-webkit-text-stroke:0.35px #ffffff;">CV</div>
<div id="t172" class="t" style="left:155.20px;top:508.00px;font:400 10.5px/14px 'Liberation Sans', sans-serif;color:#6e6e6e;">Door Stile &amp; Rail Cut List</div>
<div id="t173" class="t" style="left:411.80px;top:508.00px;font:400 10.5px/14px 'Liberation Sans', sans-serif;color:#6e6e6e;">CLDS03</div>
<div id="t174" class="t" style="left:667.10px;top:508.00px;font:400 10.5px/14px 'Liberation Sans', sans-serif;color:#6e6e6e;">Door Stile &amp; Rail Cut List</div>
<div id="t175" class="t" style="left:785.70px;top:508.00px;font:400 10.5px/14px 'Liberation Sans', sans-serif;color:#6e6e6e;">-</div>
<div id="t176" class="t" style="left:790.85px;top:508.00px;font:400 10.5px/14px 'Liberation Sans', sans-serif;color:#6e6e6e;transform:scaleX(1.0185);">Displays part operations.</div>
<div id="t177" class="t" style="left:912.55px;top:508.00px;font:400 10.5px/14px 'Liberation Sans', sans-serif;color:#6e6e6e;transform:scaleX(1.0213);">Includes banding code.</div>
<div style="left:137px;top:525.2px;width:958px;height:17.945px;background:#ffffff;"></div>
<div style="left:408px;top:525.2px;width:1px;height:17.945px;background:#fafafa;"></div>
<div style="left:536px;top:525.2px;width:1px;height:17.945px;background:#fafafa;"></div>
<div style="left:664px;top:525.2px;width:1px;height:17.945px;background:#fafafa;"></div>
<div style="left:138.2px;top:526.7px;width:13.5px;height:13.2px;background:#a3a3a3;"></div>
<div id="t178" class="t" style="left:139.00px;top:527.50px;font:700 10.8px/12px 'Liberation Sans', sans-serif;color:#ffffff;transform:scaleX(0.8067);-webkit-text-stroke:0.35px #ffffff;">CV</div>
<div id="t179" class="t" style="left:155.20px;top:526.00px;font:400 10.5px/14px 'Liberation Sans', sans-serif;color:#6e6e6e;">Door Stile &amp; Rail Cut List</div>
<div id="t180" class="t" style="left:411.80px;top:526.00px;font:400 10.5px/14px 'Liberation Sans', sans-serif;color:#6e6e6e;">CLDS04</div>
<div id="t181" class="t" style="left:667.10px;top:526.00px;font:400 10.5px/14px 'Liberation Sans', sans-serif;color:#6e6e6e;">Door Stile &amp; Rail Cut List</div>
<div id="t182" class="t" style="left:785.70px;top:526.00px;font:400 10.5px/14px 'Liberation Sans', sans-serif;color:#6e6e6e;">-</div>
<div id="t183" class="t" style="left:790.85px;top:526.00px;font:400 10.5px/14px 'Liberation Sans', sans-serif;color:#6e6e6e;transform:scaleX(1.0185);">Displays part operations.</div>
<div id="t184" class="t" style="left:912.55px;top:526.00px;font:400 10.5px/14px 'Liberation Sans', sans-serif;color:#6e6e6e;transform:scaleX(0.9885);">Parts are sorted by length then by width.</div>
<div style="left:137px;top:543.145px;width:958px;height:17.945px;background:#e9e9e9;"></div>
<div style="left:408px;top:543.145px;width:1px;height:17.945px;background:#f0f0f0;"></div>
<div style="left:536px;top:543.145px;width:1px;height:17.945px;background:#f0f0f0;"></div>
<div style="left:664px;top:543.145px;width:1px;height:17.945px;background:#f0f0f0;"></div>
<div style="left:138.2px;top:544.645px;width:13.5px;height:13.2px;background:#a3a3a3;"></div>
<div id="t185" class="t" style="left:139.00px;top:545.45px;font:700 10.8px/12px 'Liberation Sans', sans-serif;color:#ffffff;transform:scaleX(0.8067);-webkit-text-stroke:0.35px #ffffff;">CV</div>
<div id="t186" class="t" style="left:155.20px;top:544.00px;font:400 10.5px/14px 'Liberation Sans', sans-serif;color:#6e6e6e;">Door Stile &amp; Rail Cut List</div>
<div id="t187" class="t" style="left:411.80px;top:544.00px;font:400 10.5px/14px 'Liberation Sans', sans-serif;color:#6e6e6e;">CLDS05</div>
<div id="t188" class="t" style="left:667.10px;top:544.00px;font:400 10.5px/14px 'Liberation Sans', sans-serif;color:#6e6e6e;">Door Stile &amp; Rail Cut List</div>
<div id="t189" class="t" style="left:785.70px;top:544.00px;font:400 10.5px/14px 'Liberation Sans', sans-serif;color:#6e6e6e;">-</div>
<div id="t190" class="t" style="left:790.85px;top:544.00px;font:400 10.5px/14px 'Liberation Sans', sans-serif;color:#6e6e6e;transform:scaleX(1.0185);">Displays part operations.</div>
<div id="t191" class="t" style="left:912.55px;top:544.00px;font:400 10.5px/14px 'Liberation Sans', sans-serif;color:#6e6e6e;transform:scaleX(1.0198);">Prints multiple materials per page.</div>
<div style="left:137px;top:561.09px;width:958px;height:17.945px;background:#ffffff;"></div>
<div style="left:408px;top:561.09px;width:1px;height:17.945px;background:#fafafa;"></div>
<div style="left:536px;top:561.09px;width:1px;height:17.945px;background:#fafafa;"></div>
<div style="left:664px;top:561.09px;width:1px;height:17.945px;background:#fafafa;"></div>
<div style="left:138.2px;top:562.59px;width:13.5px;height:13.2px;background:#a3a3a3;"></div>
<div id="t192" class="t" style="left:139.00px;top:563.39px;font:700 10.8px/12px 'Liberation Sans', sans-serif;color:#ffffff;transform:scaleX(0.8067);-webkit-text-stroke:0.35px #ffffff;">CV</div>
<div id="t193" class="t" style="left:155.20px;top:562.00px;font:400 10.5px/14px 'Liberation Sans', sans-serif;color:#6e6e6e;">Door Stile &amp; Rail Cut List</div>
<div id="t194" class="t" style="left:411.80px;top:562.00px;font:400 10.5px/14px 'Liberation Sans', sans-serif;color:#6e6e6e;">CLDS06</div>
<div id="t195" class="t" style="left:667.10px;top:562.00px;font:400 10.5px/14px 'Liberation Sans', sans-serif;color:#6e6e6e;">Door Stile &amp; Rail Cut List</div>
<div id="t196" class="t" style="left:785.70px;top:562.00px;font:400 10.5px/14px 'Liberation Sans', sans-serif;color:#6e6e6e;">-</div>
<div id="t197" class="t" style="left:790.85px;top:562.00px;font:400 10.5px/14px 'Liberation Sans', sans-serif;color:#6e6e6e;transform:scaleX(1.0185);">Displays part operations.</div>
<div id="t198" class="t" style="left:912.55px;top:562.00px;font:400 10.5px/14px 'Liberation Sans', sans-serif;color:#6e6e6e;transform:scaleX(1.0198);">Prints multiple materials per page.</div>
<div id="t199" class="t" style="left:1076.65px;top:562.00px;font:400 10.5px/14px 'Liberation Sans', sans-serif;color:#6e6e6e;transform:scaleX(1.0158);">Rips summary in feet/meters.</div>
<div style="left:137px;top:579.0350000000001px;width:958px;height:17.945px;background:#e9e9e9;"></div>
<div style="left:408px;top:579.0350000000001px;width:1px;height:17.945px;background:#f0f0f0;"></div>
<div style="left:536px;top:579.0350000000001px;width:1px;height:17.945px;background:#f0f0f0;"></div>
<div style="left:664px;top:579.0350000000001px;width:1px;height:17.945px;background:#f0f0f0;"></div>
<div style="left:138.2px;top:580.5350000000001px;width:13.5px;height:13.2px;background:#a3a3a3;"></div>
<div id="t200" class="t" style="left:139.00px;top:581.34px;font:700 10.8px/12px 'Liberation Sans', sans-serif;color:#ffffff;transform:scaleX(0.8067);-webkit-text-stroke:0.35px #ffffff;">CV</div>
<div id="t201" class="t" style="left:155.20px;top:580.00px;font:400 10.5px/14px 'Liberation Sans', sans-serif;color:#6e6e6e;">Door Stile &amp; Rail Cut List</div>
<div id="t202" class="t" style="left:411.80px;top:580.00px;font:400 10.5px/14px 'Liberation Sans', sans-serif;color:#6e6e6e;">CLDS07</div>
<div id="t203" class="t" style="left:667.10px;top:580.00px;font:400 10.5px/14px 'Liberation Sans', sans-serif;color:#6e6e6e;">Door Stile &amp; Rail Cut List</div>
<div id="t204" class="t" style="left:785.70px;top:580.00px;font:400 10.5px/14px 'Liberation Sans', sans-serif;color:#6e6e6e;">-</div>
<div id="t205" class="t" style="left:790.85px;top:580.00px;font:400 10.5px/14px 'Liberation Sans', sans-serif;color:#6e6e6e;transform:scaleX(1.0185);">Displays part operations.</div>
<div id="t206" class="t" style="left:909.95px;top:580.00px;font:400 10.5px/14px 'Liberation Sans', sans-serif;color:#6e6e6e;transform:scaleX(1.0158);">Rips summary in feet/meters.</div>
<div style="left:137px;top:596.98px;width:958px;height:17.945px;background:#ffffff;"></div>
<div style="left:408px;top:596.98px;width:1px;height:17.945px;background:#fafafa;"></div>
<div style="left:536px;top:596.98px;width:1px;height:17.945px;background:#fafafa;"></div>
<div style="left:664px;top:596.98px;width:1px;height:17.945px;background:#fafafa;"></div>
<div style="left:138.2px;top:598.48px;width:13.5px;height:13.2px;background:#a3a3a3;"></div>
<div id="t207" class="t" style="left:139.00px;top:599.28px;font:700 10.8px/12px 'Liberation Sans', sans-serif;color:#ffffff;transform:scaleX(0.8067);-webkit-text-stroke:0.35px #ffffff;">CV</div>
<div id="t208" class="t" style="left:155.20px;top:598.00px;font:400 10.5px/14px 'Liberation Sans', sans-serif;color:#6e6e6e;">Door Stile &amp; Rail Cut List</div>
<div id="t209" class="t" style="left:411.80px;top:598.00px;font:400 10.5px/14px 'Liberation Sans', sans-serif;color:#6e6e6e;">CLDS08</div>
<div id="t210" class="t" style="left:667.10px;top:598.00px;font:400 10.5px/14px 'Liberation Sans', sans-serif;color:#6e6e6e;">Door Stile &amp; Rail Cut List</div>
<div id="t211" class="t" style="left:785.70px;top:598.00px;font:400 10.5px/14px 'Liberation Sans', sans-serif;color:#6e6e6e;">-</div>
<div id="t212" class="t" style="left:790.85px;top:598.00px;font:400 10.5px/14px 'Liberation Sans', sans-serif;color:#6e6e6e;transform:scaleX(0.9885);">Parts are sorted by length then by width.</div>
<div style="left:137px;top:614.925px;width:958px;height:17.945px;background:#e9e9e9;"></div>
<div style="left:408px;top:614.925px;width:1px;height:17.945px;background:#f0f0f0;"></div>
<div style="left:536px;top:614.925px;width:1px;height:17.945px;background:#f0f0f0;"></div>
<div style="left:664px;top:614.925px;width:1px;height:17.945px;background:#f0f0f0;"></div>
<div style="left:138.2px;top:616.425px;width:13.5px;height:13.2px;background:#a3a3a3;"></div>
<div id="t213" class="t" style="left:139.00px;top:617.23px;font:700 10.8px/12px 'Liberation Sans', sans-serif;color:#ffffff;transform:scaleX(0.8067);-webkit-text-stroke:0.35px #ffffff;">CV</div>
<div id="t214" class="t" style="left:155.20px;top:616.00px;font:400 10.5px/14px 'Liberation Sans', sans-serif;color:#6e6e6e;">Door Stile &amp; Rail Cut List</div>
<div id="t215" class="t" style="left:411.80px;top:616.00px;font:400 10.5px/14px 'Liberation Sans', sans-serif;color:#6e6e6e;">CLDS09</div>
<div id="t216" class="t" style="left:667.10px;top:616.00px;font:400 10.5px/14px 'Liberation Sans', sans-serif;color:#6e6e6e;">Door Stile &amp; Rail Cut List</div>
<div id="t217" class="t" style="left:785.70px;top:616.00px;font:400 10.5px/14px 'Liberation Sans', sans-serif;color:#6e6e6e;">-</div>
<div id="t218" class="t" style="left:790.85px;top:616.00px;font:400 10.5px/14px 'Liberation Sans', sans-serif;color:#6e6e6e;transform:scaleX(1.0158);">Rips summary in feet/meters.</div>
<div style="left:137px;top:632.87px;width:958px;height:17.945px;background:#ffffff;"></div>
<div style="left:408px;top:632.87px;width:1px;height:17.945px;background:#fafafa;"></div>
<div style="left:536px;top:632.87px;width:1px;height:17.945px;background:#fafafa;"></div>
<div style="left:664px;top:632.87px;width:1px;height:17.945px;background:#fafafa;"></div>
<div style="left:138.2px;top:634.37px;width:13.5px;height:13.2px;background:#a3a3a3;"></div>
<div id="t219" class="t" style="left:139.00px;top:635.17px;font:700 10.8px/12px 'Liberation Sans', sans-serif;color:#ffffff;transform:scaleX(0.8067);-webkit-text-stroke:0.35px #ffffff;">CV</div>
<div id="t220" class="t" style="left:155.20px;top:634.00px;font:400 10.5px/14px 'Liberation Sans', sans-serif;color:#6e6e6e;">Board Stock Cut List</div>
<div id="t221" class="t" style="left:411.80px;top:634.00px;font:400 10.5px/14px 'Liberation Sans', sans-serif;color:#6e6e6e;">CLBS05</div>
<div id="t222" class="t" style="left:667.10px;top:634.00px;font:400 10.5px/14px 'Liberation Sans', sans-serif;color:#6e6e6e;">Board Stock Cut List</div>
<div id="t223" class="t" style="left:765.20px;top:634.00px;font:400 10.5px/14px 'Liberation Sans', sans-serif;color:#6e6e6e;">-</div>
<div id="t224" class="t" style="left:770.35px;top:634.00px;font:400 10.5px/14px 'Liberation Sans', sans-serif;color:#6e6e6e;transform:scaleX(1.0185);">Displays part operations.</div>
<div id="t225" class="t" style="left:892.05px;top:634.00px;font:400 10.5px/14px 'Liberation Sans', sans-serif;color:#6e6e6e;transform:scaleX(0.9885);">Parts are sorted by length then by width.</div>
<div style="left:137px;top:650.815px;width:958px;height:17.945px;background:#e9e9e9;"></div>
<div style="left:408px;top:650.815px;width:1px;height:17.945px;background:#f0f0f0;"></div>
<div style="left:536px;top:650.815px;width:1px;height:17.945px;background:#f0f0f0;"></div>
<div style="left:664px;top:650.815px;width:1px;height:17.945px;background:#f0f0f0;"></div>
<div style="left:138.2px;top:652.315px;width:13.5px;height:13.2px;background:#a3a3a3;"></div>
<div id="t226" class="t" style="left:139.00px;top:653.12px;font:700 10.8px/12px 'Liberation Sans', sans-serif;color:#ffffff;transform:scaleX(0.8067);-webkit-text-stroke:0.35px #ffffff;">CV</div>
<div id="t227" class="t" style="left:155.20px;top:652.00px;font:400 10.5px/14px 'Liberation Sans', sans-serif;color:#6e6e6e;">Board Stock Cut List</div>
<div id="t228" class="t" style="left:411.80px;top:652.00px;font:400 10.5px/14px 'Liberation Sans', sans-serif;color:#6e6e6e;">CLBS06</div>
<div id="t229" class="t" style="left:667.10px;top:652.00px;font:400 10.5px/14px 'Liberation Sans', sans-serif;color:#6e6e6e;">Board Stock Cut List</div>
<div id="t230" class="t" style="left:765.20px;top:652.00px;font:400 10.5px/14px 'Liberation Sans', sans-serif;color:#6e6e6e;">-</div>
<div id="t231" class="t" style="left:770.35px;top:652.00px;font:400 10.5px/14px 'Liberation Sans', sans-serif;color:#6e6e6e;transform:scaleX(1.0185);">Displays part operations.</div>
<div id="t232" class="t" style="left:892.05px;top:652.00px;font:400 10.5px/14px 'Liberation Sans', sans-serif;color:#6e6e6e;transform:scaleX(1.0198);">Prints multiple materials per page.</div>
<div style="left:137px;top:656.1px;width:958px;height:14.4px;background:#ffffff;"></div>
<div style="left:137px;top:656.1px;width:958px;height:0.8px;background:#e4e4e4;"></div>
<div style="left:137px;top:656.1px;width:13.4px;height:14.4px;background:#fdfdfd;border-right:1px solid #d0d0d0;"></div>
<div style="left:558.8px;top:656.9px;width:535px;height:13.6px;background:#cdcdcd;"></div>
<div style="left:1093.8px;top:656.9px;width:1.2px;height:13.6px;background:#e8e8e8;"></div>
<div style="left:135px;top:670px;width:960px;height:2px;background:#8c8c8c;"></div>
<div style="left:0px;top:672.2px;width:1095px;height:23.8px;background:#f1f1f1;"></div>
<div style="left:0px;top:671.2px;width:134.2px;height:1px;background:#cfcfcf;"></div>
<div style="left:0px;top:694px;width:1095px;height:2px;background:#fbfbfb;"></div>
<div style="left:0px;top:696px;width:1095px;height:2px;background:#2d6da6;"></div>
<div id="t233" class="t" style="left:9.10px;top:679.10px;font:400 9.6px/12px 'Liberation Sans', sans-serif;color:#444;">This Product is Licensed to : CV Development Team</div>
<div id="t234" class="t" style="left:937.80px;top:678.60px;font:400 9.6px/12px 'Liberation Sans', sans-serif;color:#b2b2b2;transform:scaleX(0.9618);">Inches</div>
<div id="t235" class="t" style="left:975.70px;top:678.60px;font:400 9.6px/12px 'Liberation Sans', sans-serif;color:#222;transform:scaleX(0.9525);">1/32</div>
<svg width="1095" height="698" viewBox="0 0 1095 698">
<path d="M14.3 4.7 H21 L24 7.8 V17 H14.3 Z" fill="#bcc6df"/><path d="M21 4.7 V7.8 H24 Z" fill="#7f93c0"/>
<path d="M15.6 8.2 H20 M15.6 10.4 H22.6 M15.6 12.6 H22.6 M15.6 14.8 H22.6" stroke="#d6dcee" stroke-width="0.9"/>
<path d="M32.8 6.2 H38.5 L39.8 4.9 H46.6 V17.8 H32.8 Z" fill="#5a8686"/>
<path d="M32.8 8.3 H46.9 L45.6 17.8 H32.8 Z" fill="#97976f"/>
<path d="M40 6.3 H46.6 V8.3 H40 Z" fill="#37556e"/>
<rect x="55.8" y="5.8" width="9.1" height="4.7" fill="#fdf8f4"/>
<rect x="57.9" y="12.4" width="5.3" height="4.6" fill="#f4f6fb"/>
<path d="M59.2 13.4 V16.1 L61.4 14.7 Z" fill="#1a1a1a"/>
<rect x="76.6" y="5.6" width="9.4" height="6.6" fill="#8fa0c8"/><rect x="77.6" y="6.3" width="7.4" height="5.2" fill="#b6c0dc"/>
<path d="M75.3 12.2 H87.2 V14.6 H75.3 Z" fill="#213f78"/>
<path d="M74.4 12.4 V16 H88 V12.4" fill="none" stroke="#a9b6d6" stroke-width="0.9"/>
<rect x="74.4" y="15" width="13.6" height="1.2" fill="#c9d1e6"/>
<path d="M97.3 9.4 C99.2 6.2 104.6 6 104.8 10.2 C104.9 12.6 103.6 14.4 102.2 15.6" fill="none" stroke="#44709d" stroke-width="2.6"/><path d="M96.2 5.4 L96.6 10.6 L101.4 9.6 Z" fill="#44709d"/>
<path d="M126.3 9.4 C124.4 6.2 119 6 118.8 10.2 C118.7 12.6 120 14.4 121.4 15.6" fill="none" stroke="#44709d" stroke-width="2.6"/><path d="M127.4 5.4 L127 10.6 L122.2 9.6 Z" fill="#44709d"/>
<path d="M135.9 9.2 H141.5" stroke="#dfe6f2" stroke-width="1.1"/><path d="M135.7 10.8 H141.7 L138.7 14.6 Z" fill="#dfe6f2"/><path d="M137.5 11.6 H139.9 L138.7 13.1 Z" fill="#2b579a"/>
<rect x="1043.6" y="12.3" width="6.4" height="1.7" fill="#eef2f8"/>
<rect x="1073.8" y="8.1" width="8.2" height="7" fill="none" stroke="#eef2f8" stroke-width="1.3"/><rect x="1073.2" y="7.5" width="9.4" height="1.8" fill="#eef2f8"/>
<path d="M1055.6 39.7 L1058.4 36.4 L1061.2 39.7" fill="none" stroke="#ffffff" stroke-width="1.6"/>
<circle cx="26.3" cy="68.2" r="12.7" fill="#2763a6"/>
<path d="M33.4 63.3 H20.6 V75.2" fill="none" stroke="#ffffff" stroke-width="3.1"/><path d="M21.4 64.1 L32 74.3" fill="none" stroke="#ffffff" stroke-width="3.4" stroke-linecap="round"/>
<rect x="59.70" y="55.50" width="19.6" height="23.6" fill="#fafafa" stroke="#6a6a6a" stroke-width="1.3"/>
<path d="M63.10 60.00 H75.90 M63.10 62.70 H75.90 M63.10 65.40 H75.90 M63.10 68.10 H75.90 M63.10 70.80 H75.90 M63.10 73.50 H75.90 M63.10 76.20 H75.90" stroke="#8e8e8e" stroke-width="1.75"/>
<g stroke="#4d4d4d" fill="none" stroke-linecap="round"><path d="M68.2 78.4 L79.2 67.6" stroke-width="3.1"/><path d="M78.4 63.8 L78.2 67.6 M82.6 67.4 L79.2 68.4" stroke-width="2.5"/><path d="M71.9 79.6 L75.4 74.6" stroke-width="2.2"/></g>
<path d="M82.3 100.4 H86.9 L84.6 102.9 Z" fill="#444"/>
<path d="M107.4 70.4 L98 80" stroke="#a2a2a2" stroke-width="3.3"/>
<circle cx="113.7" cy="64.2" r="8.1" fill="#f6f6f6" stroke="#a9a9a9" stroke-width="1.5"/>
<path d="M147.9 56.9 H160.6 L166.4 62.7 V79.2 H147.9 Z" fill="#fdfdfd" stroke="#666666" stroke-width="1.4"/><path d="M160.6 56.9 V62.7 H166.4" fill="none" stroke="#666666" stroke-width="1.2"/>
<rect x="181.80" y="55.50" width="19.6" height="23.6" fill="#fafafa" stroke="#6a6a6a" stroke-width="1.3"/>
<path d="M185.20 60.00 H198.00 M185.20 62.70 H198.00 M185.20 65.40 H198.00 M185.20 68.10 H198.00 M185.20 70.80 H198.00 M185.20 73.50 H198.00 M185.20 76.20 H198.00" stroke="#8e8e8e" stroke-width="1.75"/>
<g><path d="M200.4 64.4 L203.2 67.2 L191.6 78.4 L188.8 75.6 Z" fill="#f3b42c"/><path d="M200.4 64.4 L202.4 62.5 Q203.2 61.9 204 62.6 L205.3 63.9 Q205.9 64.7 205.2 65.4 L203.2 67.2 Z" fill="#c9513f"/><path d="M188.8 75.6 L191.6 78.4 L187.2 80 Z" fill="#222"/><path d="M190 76.2 L201.2 65.4" stroke="#f9d77a" stroke-width="0.9"/></g>
<rect x="223.60" y="55.50" width="19.6" height="23.6" fill="#fafafa" stroke="#6a6a6a" stroke-width="1.3"/>
<path d="M227.00 60.00 H239.80 M227.00 62.70 H239.80 M227.00 65.40 H239.80 M227.00 68.10 H239.80 M227.00 70.80 H239.80 M227.00 73.50 H239.80 M227.00 76.20 H239.80" stroke="#8e8e8e" stroke-width="1.75"/>
<path d="M246.77 72.73 L246.77 74.07 L244.59 74.79 L244.23 75.66 L245.26 77.71 L244.31 78.66 L242.26 77.63 L241.39 77.99 L240.67 80.17 L239.33 80.17 L238.61 77.99 L237.74 77.63 L235.69 78.66 L234.74 77.71 L235.77 75.66 L235.41 74.79 L233.23 74.07 L233.23 72.73 L235.41 72.01 L235.77 71.14 L234.74 69.09 L235.69 68.14 L237.74 69.17 L238.61 68.81 L239.33 66.63 L240.67 66.63 L241.39 68.81 L242.26 69.17 L244.31 68.14 L245.26 69.09 L244.23 71.14 L244.59 72.01 Z" fill="#525252"/><circle cx="240" cy="73.4" r="1.7" fill="#f4f4f4"/>
<rect x="266.30" y="55.50" width="19.6" height="23.6" fill="#fafafa" stroke="#6a6a6a" stroke-width="1.3"/>
<path d="M269.70 60.00 H282.50 M269.70 62.70 H282.50 M269.70 65.40 H282.50 M269.70 68.10 H282.50 M269.70 70.80 H282.50 M269.70 73.50 H282.50 M269.70 76.20 H282.50" stroke="#8e8e8e" stroke-width="1.75"/>
<path d="M276.2 67.6 H280.6 L283.6 70.6 V76.2 H276.2 Z" fill="#fbfbfb" stroke="#707070" stroke-width="1.1"/><path d="M280.6 67.6 V70.6 H283.6" fill="none" stroke="#707070" stroke-width="0.9"/>
<path d="M281.8 70.9 H285.8 L289 74.1 V79.4 H281.8 Z" fill="#fbfbfb" stroke="#707070" stroke-width="1.1"/><path d="M285.8 70.9 V74.1 H289" fill="none" stroke="#707070" stroke-width="0.9"/>
<rect x="302.40" y="55.50" width="19.2" height="23.6" fill="#f7f7f7" stroke="#b9b9b9" stroke-width="1.3"/>
<path d="M305.80 60.00 H318.20 M305.80 62.70 H318.20 M305.80 65.40 H318.20 M305.80 68.10 H318.20 M305.80 70.80 H318.20 M305.80 73.50 H318.20 M305.80 76.20 H318.20" stroke="#cfcfcf" stroke-width="1.75"/>
<path d="M313.4 68.4 L324.2 78.8 M324.2 68.4 L313.4 78.8" stroke="#e8a3a0" stroke-width="3.4"/>
<circle cx="359.4" cy="67.9" r="11.7" fill="#fbfbfb" stroke="#24528f" stroke-width="2.3"/>
<text x="359.3" y="75.5" text-anchor="middle" font-family="Liberation Sans, sans-serif" font-weight="700" font-size="20.5" fill="#24528f">?</text>
<path d="M357 100.4 H361.2 L359.1 102.6 Z" fill="#444"/>
<path d="M17.3 210.4 L19.3 212.5 L23 207.7" fill="none" stroke="#444" stroke-width="1"/>
<g fill="#c4c4c4"><ellipse cx="65.75" cy="395.40" rx="3.1" ry="3.6"/><path d="M59.50 404.30 C59.50 400.40 62.10 399.20 65.75 399.20 C69.40 399.20 72.00 400.40 72.00 404.30 Z"/></g>
<g fill="#5d9453"><ellipse cx="95.45" cy="395.40" rx="3.1" ry="3.6"/><path d="M89.20 404.30 C89.20 400.40 91.80 399.20 95.45 399.20 C99.10 399.20 101.70 400.40 101.70 404.30 Z"/></g>
<path d="M144.7 145 L144.7 129.8 Q144.7 128.6 145.9 128.4" fill="none" stroke="#1a1a1a" stroke-width="1.2"/>
<path d="M181.4 145 L181.4 129.8 Q181.4 128.6 182.6 128.4" fill="none" stroke="#1a1a1a" stroke-width="1.2"/>
<path d="M240.3 145 L240.3 129.8 Q240.3 128.6 241.5 128.4" fill="none" stroke="#1a1a1a" stroke-width="1.2"/>
<path d="M271.2 145 L271.2 129.8 Q271.2 128.6 272.4 128.4" fill="none" stroke="#1a1a1a" stroke-width="1.2"/>
<path d="M324.2 145 L324.2 129.8 Q324.2 128.6 325.4 128.4" fill="none" stroke="#1a1a1a" stroke-width="1.2"/>
<path d="M384.8 145 L384.8 129.8 Q384.8 128.6 386.0 128.4" fill="none" stroke="#1a1a1a" stroke-width="1.2"/>
<path d="M454.2 145 L454.2 128.6" fill="none" stroke="#1a1a1a" stroke-width="1.2"/>
<path d="M144.6 659.8 L141.0 663.3 L144.6 666.8 Z" fill="#444"/>
<rect x="148" y="131.1" width="10.2" height="10.2" fill="#fbf7e6" stroke="#e0b62e" stroke-width="2"/>
<path d="M156.4 135.6 H149 V139.4 H156.4" fill="none" stroke="#6a6250" stroke-width="0.9"/>
<g fill="#e2b92a" stroke="#a98612" stroke-width="0.7"><rect x="184.4" y="130.6" width="2.6" height="4.4"/><rect x="187" y="130.6" width="7" height="2.2"/><rect x="194" y="130.6" width="2.7" height="4.4"/><rect x="184.4" y="137.7" width="12.3" height="4.4"/></g>
<g fill="#f6e9a6"><rect x="185.3" y="131.6" width="0.9" height="1"/><rect x="189" y="131.3" width="1" height="0.8"/><rect x="191.6" y="131.3" width="1" height="0.8"/><rect x="194.9" y="131.6" width="0.9" height="1"/><rect x="186" y="139.3" width="1.2" height="1.2"/><rect x="189.6" y="139.3" width="1.2" height="1.2"/><rect x="192.4" y="139.3" width="1.2" height="1.2"/><rect x="195" y="138.6" width="0.9" height="2.4"/></g>
<g stroke="#8a6a0a" stroke-width="0.6" stroke-linejoin="round"><path d="M243.6 134 L250.6 130 L255.4 131.6 L248.2 135.8 Z" fill="#f3d65a"/><path d="M243.6 134 L248.2 135.8 V142.6 L243.6 140.4 Z" fill="#d9ae22"/><path d="M248.2 135.8 L255.4 131.6 V138.2 L248.2 142.6 Z" fill="#e4bc2c"/></g>
<rect x="276" y="130.3" width="8" height="1.5" fill="#8f9440"/>
<rect x="274.9" y="132.90" width="1.9" height="1.2" fill="#6f6f6f"/><rect x="277.9" y="132.90" width="1.9" height="1.2" fill="#6f6f6f"/><rect x="280.7" y="132.90" width="1.9" height="1.2" fill="#6f6f6f"/><rect x="283.5" y="132.90" width="1.9" height="1.2" fill="#6f6f6f"/><rect x="274.9" y="135.10" width="1.9" height="1.2" fill="#c3c67a"/><rect x="277.9" y="135.10" width="1.9" height="1.2" fill="#c3c67a"/><rect x="280.7" y="135.10" width="1.9" height="1.2" fill="#c3c67a"/><rect x="283.5" y="135.10" width="1.9" height="1.2" fill="#c3c67a"/><rect x="274.9" y="137.30" width="1.9" height="1.2" fill="#6f6f6f"/><rect x="277.9" y="137.30" width="1.9" height="1.2" fill="#6f6f6f"/><rect x="280.7" y="137.30" width="1.9" height="1.2" fill="#6f6f6f"/><rect x="283.5" y="137.30" width="1.9" height="1.2" fill="#6f6f6f"/><rect x="274.9" y="139.50" width="1.9" height="1.2" fill="#6f6f6f"/><rect x="277.9" y="139.50" width="1.9" height="1.2" fill="#6f6f6f"/><rect x="280.7" y="139.50" width="1.9" height="1.2" fill="#6f6f6f"/><rect x="283.5" y="139.50" width="1.9" height="1.2" fill="#6f6f6f"/><rect x="274.9" y="141.70" width="1.9" height="1.2" fill="#6f6f6f"/><rect x="277.9" y="141.70" width="1.9" height="1.2" fill="#6f6f6f"/><rect x="280.7" y="141.70" width="1.9" height="1.2" fill="#6f6f6f"/><rect x="283.5" y="141.70" width="1.9" height="1.2" fill="#6f6f6f"/>
<rect x="327.6" y="130.7" width="11.6" height="11.4" rx="1.2" fill="#fbfaf6" stroke="#857b66" stroke-width="1"/>
<rect x="329.2" y="132.2" width="2.5" height="7.6" rx="1.2" fill="#a89a4a" stroke="#4c4630" stroke-width="0.7"/>
<path d="M333 131.2 V141.6" stroke="#7a7468" stroke-width="0.8"/>
<circle cx="336.2" cy="134.2" r="1.5" fill="#a89a4a" stroke="#4c4630" stroke-width="0.7"/>
<rect x="335.4" y="138.4" width="3.4" height="3.2" fill="#efeee8" stroke="#6d675a" stroke-width="0.7"/>
<rect x="387.8" y="130.6" width="11.9" height="11.9" fill="#8c9a2e"/>
<rect x="388.50" y="131.30" width="2.9" height="2.9" fill="#f2e24a"/><rect x="392.35" y="131.30" width="2.9" height="2.9" fill="#f2e24a"/><rect x="396.20" y="131.30" width="2.9" height="2.9" fill="#f2e24a"/><rect x="388.50" y="135.15" width="2.9" height="2.9" fill="#f2e24a"/><rect x="392.35" y="135.15" width="2.9" height="2.9" fill="#f2e24a"/><rect x="396.20" y="135.15" width="2.9" height="2.9" fill="#f2e24a"/><rect x="388.50" y="139.00" width="2.9" height="2.9" fill="#f2e24a"/><rect x="392.35" y="139.00" width="2.9" height="2.9" fill="#f2e24a"/><rect x="396.20" y="139.00" width="2.9" height="2.9" fill="#f2e24a"/>
<path d="M391 129.6 V143.2" stroke="#111" stroke-width="1.4"/>
<path d="M388.4 136.9 H391.6 M390.4 135.6 L391.9 136.9 L390.4 138.2" fill="none" stroke="#c2281e" stroke-width="1"/>
<g stroke="#7a7a7a" stroke-width="1.1" fill="none"><path d="M1025.2 683.1 H1038.7 M1032 676.7 V689.5"/></g>
<path d="M1046.30 677.4 V689.2 M1046.3 677.40 H1058.1 M1049.25 677.4 V689.2 M1046.3 680.35 H1058.1 M1052.20 677.4 V689.2 M1046.3 683.30 H1058.1 M1055.15 677.4 V689.2 M1046.3 686.25 H1058.1 M1058.10 677.4 V689.2 M1046.3 689.20 H1058.1" stroke="#8a8a8a" stroke-width="0.9" fill="none"/>
<g stroke="#7a7a7a" stroke-width="1.1" fill="none"><rect x="1066.6" y="677.4" width="12" height="11.6"/><path d="M1066.6 680.3 H1078.6 M1072.6 680.3 V689"/></g>
<path d="M1004.6 684.2 H1011 M1009 683 H1018.5 V686 H1009 Z M1010.5 687.8 H1015" stroke="#cfcfcf" stroke-width="1.3" fill="#d4d4d4"/>
<path d="M1090 689.3 L1095 682 L1095 689.3 Z" fill="#d2d2d2"/>
</svg>
</div></body></html>
